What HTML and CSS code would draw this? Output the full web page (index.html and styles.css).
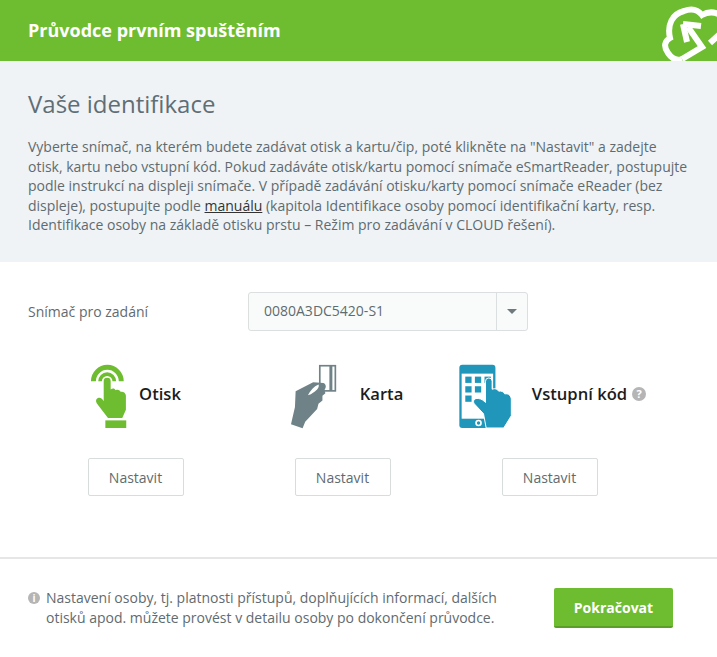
FILE: index.html

```html
<!DOCTYPE html>
<html lang="cs">
<head>
  <meta charset="UTF-8" />
  <title>Průvodce prvním spuštěním</title>
  <link rel="stylesheet" href="styles.css">
</head>
<body>

  <header class="top-bar">
    <h1>Průvodce prvním spuštěním</h1>
    <svg class="logo" viewBox="0 0 117 61" width="117" height="61">
      <path class="logo-line" d="M110 43 L122 32 M82 59 C77 61 72 59 68 53 C63 46 65 41 70 38 C67 25 72 14 84 11 C92 8 98 10 102 15 C109 11 116 12 122 16" />
      <path class="logo-line" d="M82 59 L102 47 L88 27" />
      <path class="logo-line" d="M83 24 L101 26 M83 24 L87 42" />
    </svg>
  </header>

  <section class="intro">
    <h2>Vaše identifikace</h2>
    <p>Vyberte snímač, na kterém budete zadávat otisk a kartu/čip, poté klikněte na "Nastavit" a zadejte otisk, kartu nebo vstupní kód. Pokud zadáváte otisk/kartu pomocí snímače eSmartReader, postupujte podle instrukcí na displeji snímače. V případě zadávání otisku/karty pomocí snímače eReader (bez displeje), postupujte podle <a href="#">manuálu</a> (kapitola Identifikace osoby pomocí identifikační karty, resp. Identifikace osoby na základě otisku prstu – Režim pro zadávání v CLOUD řešení).</p>
  </section>

  <main class="content">
    <div class="reader-row">
      <label class="reader-label">Snímač pro zadání</label>
      <div class="select-box">
        <span class="select-value">0080A3DC5420-S1</span>
        <span class="select-arrow"><i></i></span>
      </div>
    </div>

    <div class="methods">
      <div class="method">
        <div class="method-head">
          <svg class="icon-otisk" viewBox="54 40 114 196" width="38" height="65">
            <path class="arc" d="M64 92 A41 41 0 0 1 148 92" stroke-width="15" />
            <path class="arc" d="M84 92 A21 21 0 0 1 127 92" stroke-width="11" />
            <path class="green" d="M95 92 A10 10 0 0 1 116 92 V117 C122 112 128 113 131 119 C137 116 143 118 146 124 C153 122 162 127 162 136 V178 L151 203 H108 L75 160 C69 151 73 143 80 142 C87 141 91 146 95 152 Z" />
            <rect class="green" x="100" y="210" width="63" height="23" />
          </svg>
          <span class="method-name">Otisk</span>
        </div>
        <button class="btn-plain">Nastavit</button>
      </div>

      <div class="method">
        <div class="method-head">
          <svg class="icon-karta" viewBox="30 40 142 196" width="47" height="65">
            <rect class="card" x="120" y="45" width="47" height="76" />
            <rect class="grey" x="149" y="45" width="9" height="76" />
            <path class="grey" d="M47 122 L100 95 L131 97 C140 101 140 111 134 118 L137 128 L128 136 L128 150 L116 160 L112 176 L76 214 L68 234 L33 222 L45 170 Z" />
            <path class="gap" d="M84 134 C92 120 102 108 116 102 C120 108 112 118 104 124 C96 130 90 134 84 134 Z" />
          </svg>
          <span class="method-name">Karta</span>
        </div>
        <button class="btn-plain">Nastavit</button>
      </div>

      <div class="method">
        <div class="method-head">
          <svg class="icon-kod" viewBox="30 40 160 196" width="53" height="65">
            <rect class="blue" x="31" y="42" width="109" height="191" rx="9" />
            <rect class="screen" x="38" y="69" width="95" height="136" />
            <rect class="blue" x="49" y="78" width="19" height="19" />
            <rect class="blue" x="78" y="78" width="19" height="19" />
            <rect class="blue" x="107" y="78" width="19" height="19" />
            <rect class="blue" x="49" y="107" width="19" height="19" />
            <rect class="blue" x="78" y="107" width="19" height="19" />
            <rect class="blue" x="49" y="135" width="19" height="19" />
            <circle class="screen" cx="89" cy="218" r="10" />
            <circle class="blue" cx="89" cy="218" r="5" />
            <path class="blue hand-line" d="M110 92 A10 10 0 0 1 130 92 V116 C140 112 146 116 150 122 C158 120 165 124 168 130 C180 128 188 136 188 148 V196 L165 233 H112 L104 190 L76 160 C70 150 78 142 88 144 C98 145 104 150 110 156 Z" />
          </svg>
          <span class="method-name">Vstupní kód</span>
          <span class="help-badge">?</span>
        </div>
        <button class="btn-plain">Nastavit</button>
      </div>
    </div>
  </main>

  <footer class="bottom-bar">
    <div class="note">
      <span class="info-badge">i</span>
      <p>Nastavení osoby, tj. platnosti přístupů, doplňujících informací, dalších otisků apod. můžete provést v detailu osoby po dokončení průvodce.</p>
    </div>
    <button class="btn-green">Pokračovat</button>
  </footer>

</body>
</html>
```

FILE: styles.css

```css
* {
  box-sizing: border-box;
}

body {
  margin: 0;
  font-family: "Open Sans", sans-serif;
  font-size: 14px;
  color: #5f6b70;
  background-color: #fff;
}

.top-bar {
  height: 61px;
  padding: 0 0 2px 28px;
  background-color: #6ebd30;
  display: flex;
  align-items: center;
  position: relative;
  overflow: hidden;
}

.top-bar h1 {
  margin: 0;
  font-size: 18px;
  font-weight: 700;
  color: #fff;
}

.logo {
  position: absolute;
  top: 0;
  right: 0;
}

.logo-line {
  fill: none;
  stroke: #fff;
  stroke-width: 6;
}

.intro {
  height: 201px;
  padding: 26px 28px 0 28px;
  background-color: #eff3f6;
}

.intro h2 {
  margin: 0 0 17px 0;
  font-size: 24px;
  font-weight: 400;
  line-height: 33px;
  color: #5f6e75;
}

.intro p {
  margin: 0;
  line-height: 19.5px;
}

.intro a {
  color: #333;
  text-decoration: underline;
}

.content {
  height: 297px;
  padding-top: 30px;
  border-bottom: 2px solid #e6e6e6;
}

.reader-row {
  display: flex;
  align-items: center;
  padding-left: 28px;
}

.reader-label {
  width: 220px;
}

.select-box {
  width: 280px;
  height: 39px;
  display: flex;
  background-color: #f9fbfa;
  border: 1px solid #dcdfdf;
  border-radius: 3px;
}

.select-value {
  flex: 1;
  padding-left: 15px;
  line-height: 36px;
}

.select-arrow {
  width: 31px;
  border-left: 1px solid #dcdfdf;
  display: flex;
  align-items: center;
  justify-content: center;
}

.select-arrow i {
  border-top: 5px solid #6f7a7f;
  border-left: 5px solid transparent;
  border-right: 5px solid transparent;
}

.methods {
  display: grid;
  grid-template-columns: repeat(3, 207px);
  padding: 32px 0 0 32px;
}

.method {
  display: flex;
  flex-direction: column;
  align-items: center;
}

.method-head {
  height: 66px;
  display: flex;
  align-items: center;
  margin-bottom: 29px;
}

.method-name {
  font-size: 16.6px;
  font-weight: 600;
  color: #1c1c1c;
  position: relative;
  top: -3px;
}

.icon-otisk {
  margin-right: 11px;
}

.icon-karta {
  margin: 0 23px 0 8px;
}

.icon-kod {
  margin: 0 20px 0 6px;
}

.green {
  fill: #6ebd30;
}

.arc {
  fill: none;
  stroke: #6ebd30;
}

.grey {
  fill: #6f8287;
}

.card {
  fill: #fff;
  stroke: #6f8287;
  stroke-width: 5;
}

.gap {
  fill: #fff;
}

.blue {
  fill: #2196bb;
}

.screen {
  fill: #fff;
}

.hand-line {
  stroke: #fff;
  stroke-width: 3;
}

.help-badge,
.info-badge {
  border-radius: 50%;
  background-color: #b5b5b5;
  color: #fff;
  font-weight: 700;
  text-align: center;
  flex: none;
}

.help-badge {
  width: 14px;
  height: 14px;
  margin-left: 5px;
  font-size: 11px;
  line-height: 14px;
  position: relative;
  top: -2px;
}

.btn-plain {
  width: 96px;
  height: 38px;
  font-family: inherit;
  font-size: 14px;
  color: #5f6b70;
  background-color: #fff;
  border: 1px solid #d9dcdc;
  border-radius: 2px;
}

.bottom-bar {
  display: flex;
  align-items: center;
  padding: 29px 44px 0 28px;
  justify-content: space-between;
}

.note {
  display: flex;
  width: 476px;
}

.info-badge {
  width: 12px;
  height: 12px;
  margin: 4px 6px 0 0;
  font-size: 10px;
  line-height: 12px;
}

.note p {
  margin: 0;
  line-height: 20px;
}

.btn-green {
  width: 119px;
  height: 40px;
  font-family: inherit;
  font-size: 14px;
  font-weight: 700;
  color: #fff;
  background-color: #6ebd30;
  border: none;
  border-bottom: 2px solid #5b9f28;
  border-radius: 2px;
}
```
